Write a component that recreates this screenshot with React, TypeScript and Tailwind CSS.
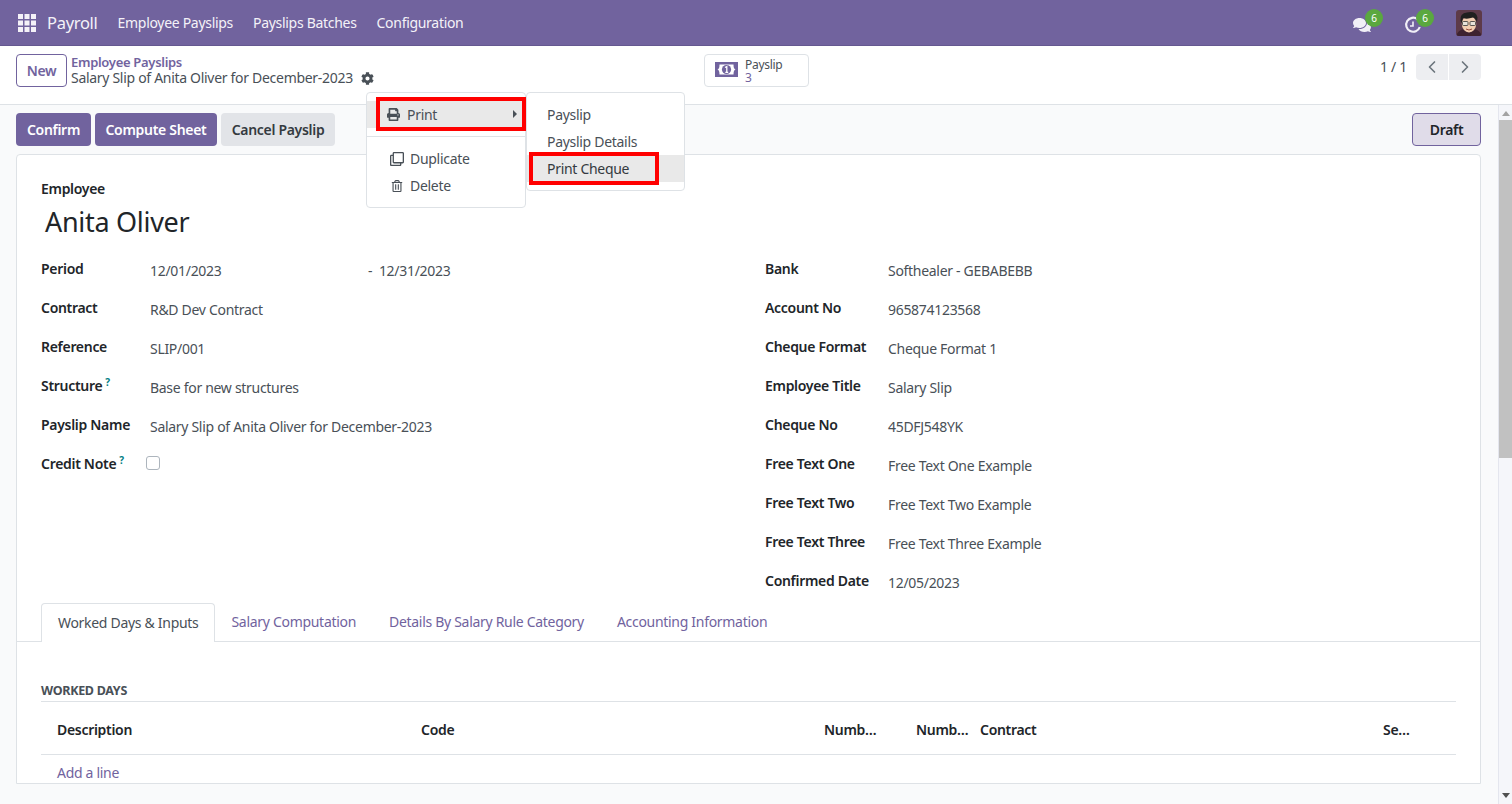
import { FaCog, FaComments, FaPrint, FaRegClone, FaRegTrashAlt } from 'react-icons/fa'
import { LuChevronLeft, LuChevronRight } from 'react-icons/lu'

const leftRows = [
  { label: 'Period', value: '12/01/2023' },
  { label: 'Contract', value: 'R&D Dev Contract' },
  { label: 'Reference', value: 'SLIP/001' },
  { label: 'Structure', value: 'Base for new structures', help: true },
  { label: 'Payslip Name', value: 'Salary Slip of Anita Oliver for December-2023' },
]

const rightRows = [
  { label: 'Bank', value: 'Softhealer - GEBABEBB' },
  { label: 'Account No', value: '965874123568' },
  { label: 'Cheque Format', value: 'Cheque Format 1' },
  { label: 'Employee Title', value: 'Salary Slip' },
  { label: 'Cheque No', value: '45DFJ548YK' },
  { label: 'Free Text One', value: 'Free Text One Example' },
  { label: 'Free Text Two', value: 'Free Text Two Example' },
  { label: 'Free Text Three', value: 'Free Text Three Example' },
  { label: 'Confirmed Date', value: '12/05/2023' },
]

const AppsIcon = () => (
  <svg width="18" height="18" viewBox="0 0 18 18" fill="#f4f2f8">
    {[0, 6.5, 13].map((y) =>
      [0, 6.5, 13].map((x) => <rect key={`${x}-${y}`} x={x} y={y} width="5" height="5" />),
    )}
  </svg>
)

const ClockIcon = () => (
  <svg width="18" height="18" viewBox="0 0 18 18" fill="none" stroke="#f1eff7">
    <path d="M13.5 3.2A7 7 0 1 0 15.8 11" strokeWidth="2.2" />
    <path d="M9 5.5V10H6" strokeWidth="1.6" />
  </svg>
)

const MoneyIcon = () => (
  <svg width="23" height="15" viewBox="0 0 23 15">
    <rect width="23" height="15" fill="#71639e" />
    <path d="M2.5 7.5Q4.5 7 4.5 2.5H18.5Q18.5 7 20.5 7.5Q18.5 8 18.5 12.5H4.5Q4.5 8 2.5 7.5Z" fill="#fff" />
    <circle cx="11.5" cy="7.5" r="4.6" fill="#71639e" />
    <path d="M10 5.5L11.8 4.6V10.4M10.3 10.4H13.2" stroke="#fff" strokeWidth="1.3" fill="none" />
  </svg>
)

const Avatar = () => (
  <svg width="26" height="26" viewBox="0 0 26 26" className="rounded-[3px]">
    <rect width="26" height="26" fill="#5d3a48" />
    <path d="M0 26Q2 20 8 19H18Q24 20 26 26Z" fill="#3d2230" />
    <ellipse cx="13" cy="14" rx="7.2" ry="8.5" fill="#f3cdb0" />
    <path d="M4.5 11Q3.5 3 11 2.5Q20 0.5 21.5 7.5L21 12Q19.5 8 17 7.5Q11 9.5 7 8Q6 10 6 13Z" fill="#20201f" />
    <rect x="6.5" y="11.5" width="5.5" height="4" rx="1" fill="#e9e3da" stroke="#333" strokeWidth="0.8" />
    <rect x="14" y="11.5" width="5.5" height="4" rx="1" fill="#e9e3da" stroke="#333" strokeWidth="0.8" />
    <path d="M10 19Q13 21 16 19" stroke="#9a4d3f" strokeWidth="1" fill="none" />
  </svg>
)

const Badge = () => (
  <span className="absolute -top-[7px] left-[12px] flex h-[18px] w-[18px] items-center justify-center rounded-full bg-[#5aa83f] text-[10px] text-white">
    6
  </span>
)

const Help = () => <sup className="ml-[3px] text-[10px] font-bold text-[#017e84]">?</sup>

const Field = ({ label, value, help, labelWidth }: { label: string; value: string; help?: boolean; labelWidth: string }) => (
  <div className="flex h-[39px] items-start">
    <div className={`${labelWidth} pt-[2px] font-semibold text-[#212529]`}>
      {label}
      {help && <Help />}
    </div>
    <div className="pt-[4px] text-[#495057]">{value}</div>
  </div>
)

export default function App() {
  return (
    <div className="flex h-[804px] w-[1512px] flex-col overflow-hidden bg-white font-['Noto_Sans',sans-serif] text-[14px] leading-[20px] tracking-[-0.3px] text-[#495057]">
      <header className="flex h-[46px] shrink-0 items-center border-b border-[#655890] bg-[#71639e] pl-[18px] pr-[30px] text-[#f4f2f8]">
        <AppsIcon />
        <span className="ml-[11px] text-[16.5px]">Payroll</span>
        <nav className="ml-[20px] flex gap-[20px]">
          <span>Employee Payslips</span>
          <span>Payslips Batches</span>
          <span>Configuration</span>
        </nav>
        <div className="ml-auto flex items-center">
          <div className="relative mr-[33px] mt-[4px]">
            <FaComments className="text-[18px] text-[#f1eff7]" />
            <Badge />
          </div>
          <div className="relative mr-[34px] mt-[4px]">
            <ClockIcon />
            <Badge />
          </div>
          <Avatar />
        </div>
      </header>

      <section className="flex h-[59px] shrink-0 border-b border-[#dee2e6] pl-[16px] pr-[31px] pt-[8px]">
        <button className="h-[33px] w-[51px] rounded-[4px] border border-[#71639e] font-semibold text-[#71639e]">New</button>
        <div className="ml-[4px] w-[320px] leading-[16px]">
          <div className="text-[13px] font-semibold leading-[16px] text-[#71639e]">Employee Payslips</div>
          <div className="flex items-center whitespace-nowrap">
            Salary Slip of Anita Oliver for December-2023
            <FaCog className="ml-[8px] text-[13px] text-[#495057]" />
          </div>
        </div>
        <div className="ml-[313px] flex h-[33px] w-[105px] items-start gap-[7px] rounded-[4px] border border-[#dee2e6] px-[10px] pt-[3px] text-[12px] leading-[13px]">
          <span className="pt-[4px]">
            <MoneyIcon />
          </span>
          <div>
            <div>Payslip</div>
            <div className="text-[#71639e]">3</div>
          </div>
        </div>
        <div className="ml-auto flex h-[26px] items-center">
          <span className="mr-[9px]">1 / 1</span>
          <div className="flex h-[26px] gap-px">
            <span className="flex w-[32px] items-center justify-center rounded-l-[4px] bg-[#edeef1]">
              <LuChevronLeft className="text-[20px] text-[#6c757d]" />
            </span>
            <span className="flex w-[32px] items-center justify-center rounded-r-[4px] bg-[#edeef1]">
              <LuChevronRight className="text-[20px] text-[#6c757d]" />
            </span>
          </div>
        </div>
      </section>

      <main className="flex min-h-0 flex-1 bg-[#f9fafb]">
        <div className="min-w-0 flex-1 overflow-hidden pl-[16px] pr-[17px] pt-[8px]">
          <div className="flex h-[33px] gap-[4px] font-semibold">
            <button className="w-[75px] rounded-[4px] bg-[#71639e] text-white">Confirm</button>
            <button className="w-[122px] rounded-[4px] bg-[#71639e] text-white">Compute Sheet</button>
            <button className="w-[114px] rounded-[4px] bg-[#e2e4e8] text-[#343a40]">Cancel Payslip</button>
            <div className="ml-auto flex w-[69px] items-center justify-center rounded-[4px] border border-[#71639e] bg-[#e0dce9] text-[#212529]">Draft</div>
          </div>

          <div className="mt-[8px] rounded-t-[4px] border border-[#dee2e6] bg-white">
            <div className="px-[24px] pt-[24px]">
              <div className="font-semibold leading-[20px] text-[#212529]">Employee</div>
              <div className="mt-[4px] pl-[4px] text-[27px] leading-[38px] text-[#212529]">Anita Oliver</div>
              <div className="mt-[16px] grid h-[351px] grid-cols-[724px_1fr]">
                <div>
                  <div className="flex h-[39px] items-start">
                    <div className="w-[109px] pt-[2px] font-semibold text-[#212529]">Period</div>
                    <div className="w-[218px] pt-[4px]">12/01/2023</div>
                    <div className="pt-[4px]">-&nbsp; 12/31/2023</div>
                  </div>
                  {leftRows.slice(1).map((row) => (
                    <Field key={row.label} {...row} labelWidth="w-[109px]" />
                  ))}
                  <div className="flex h-[39px] items-start">
                    <div className="w-[105px] pt-[2px] font-semibold text-[#212529]">
                      Credit Note
                      <Help />
                    </div>
                    <span className="mt-[4px] h-[14px] w-[14px] rounded-[3px] border border-[#adb5bd] bg-white" />
                  </div>
                </div>
                <div>
                  {rightRows.map((row) => (
                    <Field key={row.label} {...row} labelWidth="w-[123px]" />
                  ))}
                </div>
              </div>
            </div>

            <div className="mt-[-5px] flex h-[39px] border-b border-[#dee2e6] pl-[24px]">
              <div className="h-[39px] rounded-t-[4px] border border-b-0 border-[#dee2e6] bg-white px-[16px] pt-[9px]">Worked Days &amp; Inputs</div>
              <div className="flex gap-[33px] pl-[16px] pt-[9px] text-[#71639e]">
                <span>Salary Computation</span>
                <span>Details By Salary Rule Category</span>
                <span>Accounting Information</span>
              </div>
            </div>

            <div className="px-[24px] pt-[40px]">
              <div className="border-b border-[#dee2e6] pb-[1px] text-[12.5px] font-bold uppercase leading-[18px]">Worked Days</div>
              <div className="mt-[18px] flex h-[35px] items-start border-b border-[#dee2e6] pl-[16px] font-semibold text-[#212529]">
                <span className="w-[364px]">Description</span>
                <span className="w-[403px]">Code</span>
                <span className="w-[92px]">Numb…</span>
                <span className="w-[64px]">Numb…</span>
                <span className="w-[403px]">Contract</span>
                <span>Se…</span>
              </div>
              <div className="pl-[16px] pt-[8px] text-[#71639e]">Add a line</div>
            </div>
          </div>
        </div>

        <div className="flex w-[14px] shrink-0 flex-col items-center border-l border-[#e4e6ee] bg-[#f5f6fa]">
          <div className="mt-[6px] h-0 w-0 border-x-[4px] border-b-[5px] border-x-transparent border-b-[#a3a3a3]" />
          <div className="mt-[4px] h-[338px] w-full bg-[#c1c1c1]" />
          <div className="mt-auto mb-[6px] h-0 w-0 border-x-[4px] border-t-[5px] border-x-transparent border-t-[#505050]" />
        </div>
      </main>

      {/* gear menu */}
      <div className="absolute left-[366px] top-[92px] z-10 h-[116px] w-[160px] rounded-[4px] border border-[#dee2e6] bg-white pt-[8px]">
        <div className="relative flex h-[27px] items-center bg-[#e9e9e9] pl-[20px]">
          <FaPrint className="text-[13px] text-[#495057]" />
          <span className="ml-[7px]">Print</span>
          <span className="absolute right-[8px] top-[9px] h-0 w-0 border-y-[4px] border-l-[4px] border-y-transparent border-l-[#495057]" />
        </div>
        <div className="mt-[8px] border-t border-[#dee2e6]" />
        <div className="mt-[8px] flex h-[27px] items-center pl-[23px]">
          <FaRegClone className="text-[14px] text-[#495057]" />
          <span className="ml-[6px]">Duplicate</span>
        </div>
        <div className="flex h-[27px] items-center pl-[24px]">
          <FaRegTrashAlt className="text-[12px] text-[#495057]" />
          <span className="ml-[7px]">Delete</span>
        </div>
      </div>

      <div className="absolute left-[526px] top-[92px] z-10 h-[99px] w-[159px] rounded-[4px] border border-[#dee2e6] bg-white pt-[8px]">
        <div className="flex h-[27px] items-center pl-[20px]">Payslip</div>
        <div className="flex h-[27px] items-center pl-[20px]">Payslip Details</div>
        <div className="flex h-[27px] items-center bg-[#e9e9e9] pl-[20px] text-[#343a40]">Print Cheque</div>
      </div>

      {/* red highlight boxes */}
      <div className="absolute left-[376px] top-[97px] z-20 h-[34px] w-[150px] border-[4px] border-[#ff0000]" />
      <div className="absolute left-[529px] top-[152px] z-20 h-[33px] w-[130px] border-[4px] border-[#ff0000]" />
    </div>
  )
}
